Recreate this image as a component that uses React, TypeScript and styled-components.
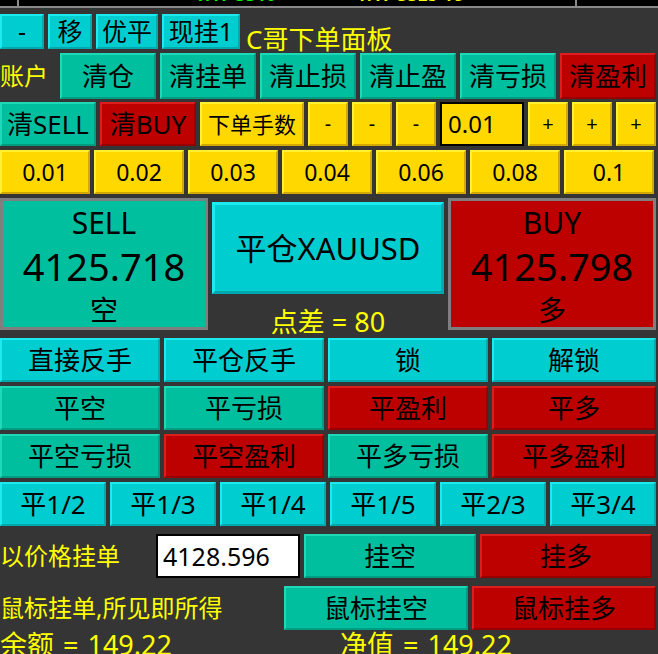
import React from "react";
import styled, { createGlobalStyle, css } from "styled-components";

const Global = createGlobalStyle`
  html, body { margin: 0; padding: 0; background: #353535; }
  body { font-family: "Noto Sans", "Noto Sans CJK SC", sans-serif; }
  * { box-sizing: border-box; }
`;

type Tone = "cyan" | "teal" | "red" | "yellow";

const tones: Record<Tone, { bg: string; hi: string; lo: string }> = {
  cyan: { bg: "#00cdd0", hi: "#1ceaee", lo: "#00a9ad" },
  teal: { bg: "#00bf9f", hi: "#1ed8b8", lo: "#009c82" },
  red: { bg: "#bd0000", hi: "#dc1e1e", lo: "#980000" },
  yellow: { bg: "#ffd800", hi: "#fff030", lo: "#d2a900" },
};

const Page = styled.div`
  width: 658px;
  height: 654px;
  overflow: hidden;
  background: #353535;
  display: flex;
  flex-direction: column;
`;

const Strip = styled.div`
  height: 8px;
  flex-shrink: 0;
  background: #000;
  border-bottom: 2px solid #8a8a8a;
  display: flex;
  overflow: hidden;
`;

const StripCell = styled.div<{ $w: number; $line?: boolean }>`
  width: ${(p) => p.$w}px;
  height: 6px;
  overflow: hidden;
  ${(p) => p.$line && css`border-right: 2px solid #8a8a8a;`}
`;

const StripText = styled.div<{ $c: string; $x: number }>`
  color: ${(p) => p.$c};
  font-size: 16px;
  line-height: 16px;
  margin-top: -13px;
  margin-left: ${(p) => p.$x}px;
  font-weight: bold;
  letter-spacing: 1px;
  white-space: nowrap;
`;

const Row = styled.div<{ $mt: number; $h: number; $gap?: number }>`
  display: flex;
  align-items: stretch;
  margin-top: ${(p) => p.$mt}px;
  height: ${(p) => p.$h}px;
  gap: ${(p) => p.$gap ?? 4}px;
  flex-shrink: 0;
`;

const Btn = styled.div<{ $t: Tone; $w: number; $fs?: number; $b?: number; $h?: number }>`
  width: ${(p) => p.$w}px;
  ${(p) => p.$h && css`height: ${p.$h}px;`}
  flex-shrink: 0;
  background: ${(p) => tones[p.$t].bg};
  border-style: solid;
  border-width: ${(p) => p.$b ?? 2}px;
  border-color: ${(p) => `${tones[p.$t].hi} ${tones[p.$t].lo} ${tones[p.$t].lo} ${tones[p.$t].hi}`};
  color: #000;
  font-size: ${(p) => p.$fs ?? 26}px;
  line-height: 1;
  display: flex;
  align-items: center;
  justify-content: center;
  white-space: nowrap;
`;

const Label = styled.div<{ $w: number; $fs?: number }>`
  width: ${(p) => p.$w}px;
  flex-shrink: 0;
  color: #ffff00;
  font-size: ${(p) => p.$fs ?? 24}px;
  line-height: 1;
  display: flex;
  align-items: center;
  white-space: nowrap;
`;

const Title = styled.div`
  color: #ffff00;
  font-size: 26px;
  line-height: 1;
  margin-left: 2px;
  align-self: flex-end;
  margin-bottom: -3px;
  white-space: nowrap;
`;

const LotInput = styled.div`
  width: 84px;
  flex-shrink: 0;
  background: #ffd800;
  border: 2px solid #000;
  font-size: 24px;
  line-height: 1;
  display: flex;
  align-items: center;
  padding-left: 6px;
  color: #000;
`;

const PriceInput = styled.div`
  width: 144px;
  flex-shrink: 0;
  background: #fff;
  border: 2px solid #000;
  font-size: 25px;
  line-height: 1;
  display: flex;
  align-items: center;
  padding-left: 5px;
  color: #000;
`;

const QuoteBox = styled.div<{ $t: Tone }>`
  width: 208px;
  flex-shrink: 0;
  background: ${(p) => tones[p.$t].bg};
  border: 3px solid #7f7f7f;
  display: flex;
  flex-direction: column;
  align-items: center;
  color: #000;
  padding-top: 2px;
`;

const QuoteLine = styled.div<{ $fs: number; $h: number }>`
  font-size: ${(p) => p.$fs}px;
  line-height: ${(p) => p.$h}px;
  height: ${(p) => p.$h}px;
  white-space: nowrap;
`;

const Middle = styled.div`
  width: 232px;
  flex-shrink: 0;
  display: flex;
  flex-direction: column;
  padding-top: 4px;
`;

const Spread = styled.div`
  color: #ffff00;
  font-size: 27px;
  line-height: 1;
  text-align: center;
  margin-top: 14px;
  white-space: nowrap;
`;

const Footer = styled.div`
  display: flex;
  flex-shrink: 0;
  color: #ffff00;
  font-size: 27px;
  line-height: 30px;
`;

const FooterItem = styled.div<{ $w: number }>`
  width: ${(p) => p.$w}px;
  flex-shrink: 0;
  white-space: nowrap;
  word-spacing: 2px;
`;

const Spacer = styled.div<{ $w: number }>`
  width: ${(p) => p.$w}px;
  flex-shrink: 0;
`;

export default function App() {
  const lots = ["0.01", "0.02", "0.03", "0.04", "0.06", "0.08", "0.1"];
  return (
    <Page>
      <Global />
      <Strip>
        <StripCell $w={19} $line />
        <StripCell $w={558} $line>
          <div style={{ display: "flex" }}>
            <StripText $c="#00ff00" $x={176}>1.17 3310</StripText>
            <StripText $c="#ffff00" $x={80}>1.17 3325 18</StripText>
          </div>
        </StripCell>
        <StripCell $w={81} />
      </Strip>

      <Row $mt={6} $h={35}>
        <Btn $t="cyan" $w={44} $fs={25}>-</Btn>
        <Btn $t="cyan" $w={44} $fs={25}>移</Btn>
        <Btn $t="cyan" $w={62} $fs={25}>优平</Btn>
        <Btn $t="cyan" $w={78} $fs={25}>现挂1</Btn>
        <Title>C哥下单面板</Title>
      </Row>

      <Row $mt={4} $h={46}>
        <Label $w={56}>账户</Label>
        <Btn $t="teal" $w={96}>清仓</Btn>
        <Btn $t="teal" $w={96}>清挂单</Btn>
        <Btn $t="teal" $w={96}>清止损</Btn>
        <Btn $t="teal" $w={96}>清止盈</Btn>
        <Btn $t="teal" $w={96}>清亏损</Btn>
        <Btn $t="red" $w={96}>清盈利</Btn>
      </Row>

      <Row $mt={3} $h={44}>
        <Btn $t="teal" $w={96}>清SELL</Btn>
        <Btn $t="red" $w={96}>清BUY</Btn>
        <Btn $t="yellow" $w={104} $fs={22}>下单手数</Btn>
        <Btn $t="yellow" $w={40} $fs={20}>-</Btn>
        <Btn $t="yellow" $w={40} $fs={20}>-</Btn>
        <Btn $t="yellow" $w={40} $fs={20}>-</Btn>
        <LotInput>0.01</LotInput>
        <Btn $t="yellow" $w={40} $fs={20}>+</Btn>
        <Btn $t="yellow" $w={40} $fs={20}>+</Btn>
        <Btn $t="yellow" $w={40} $fs={20}>+</Btn>
      </Row>

      <Row $mt={4} $h={44}>
        {lots.map((l) => (
          <Btn key={l} $t="yellow" $w={90} $fs={23}>{l}</Btn>
        ))}
      </Row>

      <Row $mt={4} $h={132}>
        <QuoteBox $t="teal">
          <QuoteLine $fs={30} $h={40}>SELL</QuoteLine>
          <QuoteLine $fs={38} $h={47}>4125.718</QuoteLine>
          <QuoteLine $fs={28} $h={40}>空</QuoteLine>
        </QuoteBox>
        <Middle>
          <Btn $t="cyan" $w={232} $h={92} $fs={31} $b={3}>平仓XAUUSD</Btn>
          <Spread>点差 = 80</Spread>
        </Middle>
        <QuoteBox $t="red">
          <QuoteLine $fs={30} $h={40}>BUY</QuoteLine>
          <QuoteLine $fs={38} $h={47}>4125.798</QuoteLine>
          <QuoteLine $fs={28} $h={40}>多</QuoteLine>
        </QuoteBox>
      </Row>

      <Row $mt={8} $h={44}>
        <Btn $t="cyan" $w={160}>直接反手</Btn>
        <Btn $t="cyan" $w={160}>平仓反手</Btn>
        <Btn $t="cyan" $w={160}>锁</Btn>
        <Btn $t="cyan" $w={164}>解锁</Btn>
      </Row>

      <Row $mt={4} $h={44}>
        <Btn $t="teal" $w={160}>平空</Btn>
        <Btn $t="teal" $w={160}>平亏损</Btn>
        <Btn $t="red" $w={160}>平盈利</Btn>
        <Btn $t="red" $w={164}>平多</Btn>
      </Row>

      <Row $mt={4} $h={44}>
        <Btn $t="teal" $w={160}>平空亏损</Btn>
        <Btn $t="red" $w={160}>平空盈利</Btn>
        <Btn $t="teal" $w={160}>平多亏损</Btn>
        <Btn $t="red" $w={164}>平多盈利</Btn>
      </Row>

      <Row $mt={4} $h={44}>
        {["平1/2", "平1/3", "平1/4", "平1/5", "平2/3", "平3/4"].map((t) => (
          <Btn key={t} $t="cyan" $w={106}>{t}</Btn>
        ))}
      </Row>

      <Row $mt={8} $h={44}>
        <Label $w={152}>以价格挂单</Label>
        <PriceInput>4128.596</PriceInput>
        <Btn $t="teal" $w={172}>挂空</Btn>
        <Btn $t="red" $w={172}>挂多</Btn>
      </Row>

      <Row $mt={8} $h={44} $gap={0}>
        <Label $w={284}>鼠标挂单,所见即所得</Label>
        <Btn $t="teal" $w={184}>鼠标挂空</Btn>
        <Spacer $w={4} />
        <Btn $t="red" $w={184}>鼠标挂多</Btn>
      </Row>

      <Footer>
        <FooterItem $w={340}>余额 = 149.22</FooterItem>
        <FooterItem $w={300}>净值 = 149.22</FooterItem>
      </Footer>
    </Page>
  );
}
